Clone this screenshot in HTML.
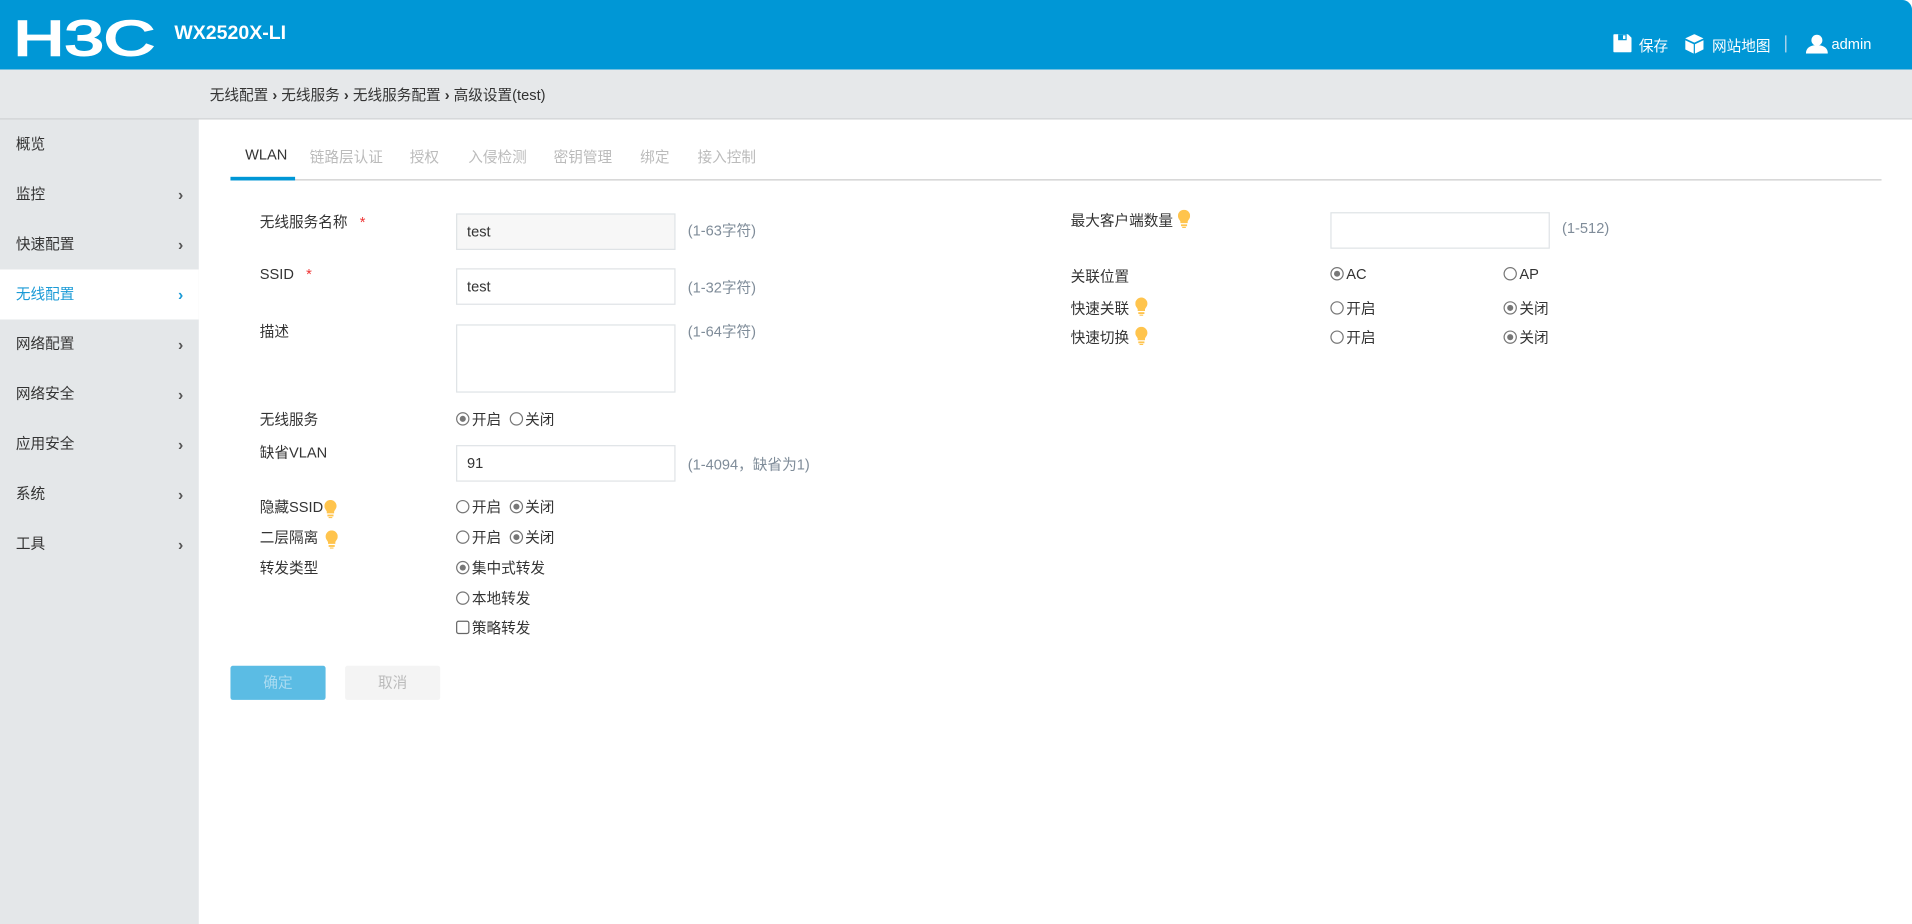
<!DOCTYPE html>
<html><head><meta charset="utf-8">
<style>
*{margin:0;padding:0;box-sizing:border-box}
html,body{width:1912px;height:924px;overflow:hidden;background:#fff}
body{font-family:"Liberation Sans","Noto Sans CJK SC",sans-serif;font-size:12px;color:#333}
.root{position:absolute;left:0;top:0;width:1568px;height:758px;transform:scale(1.21939);transform-origin:0 0}
.a{position:absolute;white-space:nowrap}
.hdr{left:0;top:0;width:1568px;height:57px;background:#0097d6;border-top-right-radius:8px}
.bc{left:0;top:57px;width:1568px;height:41px;background:#e6e8ea;border-bottom:1px solid #cfd1d3}
.side{left:0;top:98px;width:163px;height:660px;background:#e4e7e9}
.mi{position:absolute;left:0;width:163px;height:41px;line-height:41px;padding-left:13px;font-size:12px;color:#333}
.mi .ch{position:absolute;left:146px;top:0;color:#555;font-size:13px;font-weight:bold}
.mi.act{background:#fff;color:#1a9ad6}
.mi.act .ch{color:#1a9ad6}
.tab{top:120px;color:#bbb;font-size:12px}
.lbl{color:#333}
.inp{position:absolute;width:180px;height:30px;border:1px solid #dfe3e6;background:#fff;padding-left:8px;line-height:28px;color:#333}
.hint{color:#7f8c99}
.r{display:inline-block;width:11px;height:11px;border:1px solid #777;border-radius:50%;vertical-align:-1px;margin-right:2px;position:relative;background:#fff}
.r.on::after{content:"";position:absolute;left:2px;top:2px;width:5px;height:5px;border-radius:50%;background:#777}
.cb{display:inline-block;width:11px;height:11px;border:1px solid #666;border-radius:2px;vertical-align:-1px;margin-right:2px}
.star{color:#e33;font-size:12px}
</style></head><body><div class="root">
<div class="a hdr"></div>
<svg class="a" style="left:10px;top:15px" width="120" height="32"><text x="1" y="30" font-family="Liberation Sans" font-size="40" fill="#fff" stroke="#fff" stroke-width="1.6" textLength="116" lengthAdjust="spacingAndGlyphs">H3C</text></svg>
<div class="a" style="left:143px;top:19px;color:#fff;font-size:16px;font-weight:bold">WX2520X-LI</div>
<svg class="a" style="left:1323px;top:28px" width="15" height="15" viewBox="0 0 15 15"><path d="M1 0h11l3 3v11a1 1 0 0 1-1 1H1a1 1 0 0 1-1-1V1a1 1 0 0 1 1-1z" fill="#fff"/><rect x="4" y="0" width="7" height="5" fill="#0097d6"/><rect x="8" y="1" width="2" height="3" fill="#fff"/></svg>
<div class="a" style="left:1344px;top:29px;color:#fff">保存</div>
<svg class="a" style="left:1382px;top:28px" width="15" height="16" viewBox="0 0 15 16"><path d="M7.5 0L15 3.5 7.5 7 0 3.5z" fill="#fff"/><path d="M0 5l7 3.3V16L0 12.5z" fill="#fff"/><path d="M15 5L8 8.3V16l7-3.5z" fill="#fff"/></svg>
<div class="a" style="left:1404px;top:29px;color:#fff">网站地图</div>
<div class="a" style="left:1464px;top:29px;width:1px;height:14px;background:#cde"></div>
<svg class="a" style="left:1481px;top:28px" width="18" height="16" viewBox="0 0 18 16"><circle cx="9" cy="5" r="4.5" fill="#fff"/><path d="M0 16c0-5 4-7 9-7s9 2 9 7z" fill="#fff"/></svg>
<div class="a" style="left:1502px;top:29px;color:#fff">admin</div>
<div class="a bc"></div>
<div class="a" style="left:172px;top:69px;color:#333">无线配置 <b>›</b> 无线服务 <b>›</b> 无线服务配置 <b>›</b> 高级设置(test)</div>
<div class="a side">
<div class="mi" style="top:0">概览</div>
<div class="mi" style="top:41px">监控<span class="ch">›</span></div>
<div class="mi" style="top:82px">快速配置<span class="ch">›</span></div>
<div class="mi act" style="top:123px">无线配置<span class="ch">›</span></div>
<div class="mi" style="top:164px">网络配置<span class="ch">›</span></div>
<div class="mi" style="top:205px">网络安全<span class="ch">›</span></div>
<div class="mi" style="top:246px">应用安全<span class="ch">›</span></div>
<div class="mi" style="top:287px">系统<span class="ch">›</span></div>
<div class="mi" style="top:328px">工具<span class="ch">›</span></div>
</div>
<div class="a tab" style="left:201px;color:#333">WLAN</div>
<div class="a tab" style="left:254px">链路层认证</div>
<div class="a tab" style="left:336px">授权</div>
<div class="a tab" style="left:384px">入侵检测</div>
<div class="a tab" style="left:454px">密钥管理</div>
<div class="a tab" style="left:525px">绑定</div>
<div class="a tab" style="left:572px">接入控制</div>
<div class="a" style="left:189px;top:147px;width:1354px;height:1px;background:#ccc"></div>
<div class="a" style="left:189px;top:145px;width:53px;height:3px;background:#0097d6"></div>

<div class="a lbl" style="left:213px;top:173px">无线服务名称 &nbsp;&nbsp;<span class="star">*</span></div>
<div class="inp" style="left:374px;top:175px;background:#f7f7f7">test</div>
<div class="a hint" style="left:564px;top:180px">(1-63字符)</div>
<div class="a lbl" style="left:213px;top:218px">SSID &nbsp;&nbsp;<span class="star">*</span></div>
<div class="inp" style="left:374px;top:220px">test</div>
<div class="a hint" style="left:564px;top:227px">(1-32字符)</div>
<div class="a lbl" style="left:213px;top:263px">描述</div>
<div class="inp" style="left:374px;top:266px;height:56px"></div>
<div class="a hint" style="left:564px;top:263px">(1-64字符)</div>
<div class="a lbl" style="left:213px;top:335px">无线服务</div>
<div class="a" style="left:374px;top:335px"><span class="r on"></span>开启 &nbsp;<span class="r"></span>关闭</div>
<div class="a lbl" style="left:213px;top:362px">缺省VLAN</div>
<div class="inp" style="left:374px;top:365px">91</div>
<div class="a hint" style="left:564px;top:372px">(1-4094，缺省为1)</div>
<div class="a lbl" style="left:213px;top:407px">隐藏SSID</div>
<div class="a" style="left:374px;top:407px"><span class="r"></span>开启 &nbsp;<span class="r on"></span>关闭</div>
<div class="a lbl" style="left:213px;top:432px">二层隔离</div>
<div class="a" style="left:374px;top:432px"><span class="r"></span>开启 &nbsp;<span class="r on"></span>关闭</div>
<div class="a lbl" style="left:213px;top:457px">转发类型</div>
<div class="a" style="left:374px;top:457px"><span class="r on"></span>集中式转发</div>
<div class="a" style="left:374px;top:482px"><span class="r"></span>本地转发</div>
<div class="a" style="left:374px;top:506px"><span class="cb"></span>策略转发</div>

<div class="a" style="left:189px;top:546px;width:78px;height:28px;background:#5bbce4;border-radius:2px;color:#a9dbf1;text-align:center;line-height:28px">确定</div>
<div class="a" style="left:283px;top:546px;width:78px;height:28px;background:#f4f4f4;border-radius:2px;color:#bbb;text-align:center;line-height:28px">取消</div>

<div class="a lbl" style="left:878px;top:172px">最大客户端数量</div>
<div class="inp" style="left:1091px;top:174px"></div>
<div class="a hint" style="left:1281px;top:180px">(1-512)</div>
<div class="a lbl" style="left:878px;top:218px">关联位置</div>
<div class="a" style="left:1091px;top:218px"><span class="r on"></span>AC</div>
<div class="a" style="left:1233px;top:218px"><span class="r"></span>AP</div>
<div class="a lbl" style="left:878px;top:244px">快速关联</div>
<div class="a" style="left:1091px;top:244px"><span class="r"></span>开启</div>
<div class="a" style="left:1233px;top:244px"><span class="r on"></span>关闭</div>
<div class="a lbl" style="left:878px;top:268px">快速切换</div>
<div class="a" style="left:1091px;top:268px"><span class="r"></span>开启</div>
<div class="a" style="left:1233px;top:268px"><span class="r on"></span>关闭</div>

<svg width="0" height="0" style="position:absolute"><defs><g id="bulb"><path d="M5 0a5 5 0 0 1 5 5c0 2-1.3 3-2 4.5V11H2V9.5C1.3 8 0 7 0 5a5 5 0 0 1 5-5z" fill="#ffc44d"/><rect x="2.5" y="12" width="5" height="1.5" fill="#ffc44d"/><rect x="3.5" y="14" width="3" height="1" fill="#ffc44d"/></g></defs></svg>
<svg class="a" style="left:266px;top:410px" width="10" height="15"><use href="#bulb"/></svg>
<svg class="a" style="left:267px;top:435px" width="10" height="15"><use href="#bulb"/></svg>
<svg class="a" style="left:966px;top:172px" width="10" height="15"><use href="#bulb"/></svg>
<svg class="a" style="left:931px;top:244px" width="10" height="15"><use href="#bulb"/></svg>
<svg class="a" style="left:931px;top:268px" width="10" height="15"><use href="#bulb"/></svg>
</div></body></html>
